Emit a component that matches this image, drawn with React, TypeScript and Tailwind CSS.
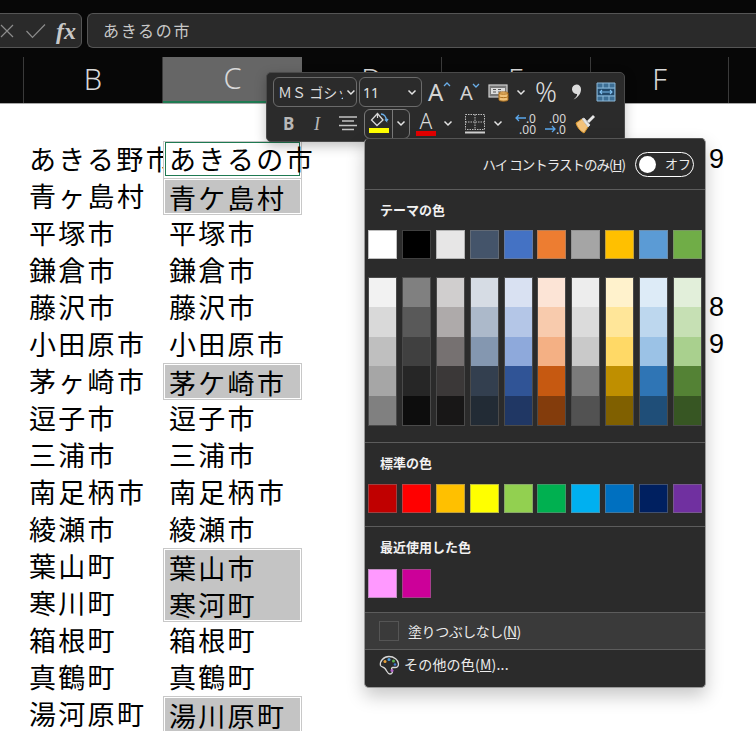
import React from "react";

const JP = "font-['Noto_Sans_CJK_JP','Noto_Sans',sans-serif]";

const theme = ["bg-[#ffffff]","bg-[#000000]","bg-[#e7e6e6]","bg-[#44546a]","bg-[#4472c4]","bg-[#ed7d31]","bg-[#a5a5a5]","bg-[#ffc000]","bg-[#5b9bd5]","bg-[#70ad47]"];
const shades = [
  ["bg-[#f2f2f2]","bg-[#d9d9d9]","bg-[#bfbfbf]","bg-[#a6a6a6]","bg-[#808080]"],
  ["bg-[#808080]","bg-[#595959]","bg-[#404040]","bg-[#262626]","bg-[#0d0d0d]"],
  ["bg-[#d0cece]","bg-[#aeaaaa]","bg-[#767171]","bg-[#3b3838]","bg-[#181717]"],
  ["bg-[#d6dce4]","bg-[#acb9ca]","bg-[#8497b0]","bg-[#333f4f]","bg-[#222b35]"],
  ["bg-[#d9e1f2]","bg-[#b4c6e7]","bg-[#8ea9db]","bg-[#305496]","bg-[#203764]"],
  ["bg-[#fce4d6]","bg-[#f8cbad]","bg-[#f4b084]","bg-[#c65911]","bg-[#833c0c]"],
  ["bg-[#ededed]","bg-[#dbdbdb]","bg-[#c9c9c9]","bg-[#7b7b7b]","bg-[#525252]"],
  ["bg-[#fff2cc]","bg-[#ffe699]","bg-[#ffd966]","bg-[#bf8f00]","bg-[#806000]"],
  ["bg-[#ddebf7]","bg-[#bdd7ee]","bg-[#9bc2e6]","bg-[#2f75b5]","bg-[#1f4e78]"],
  ["bg-[#e2efda]","bg-[#c6e0b4]","bg-[#a9d08e]","bg-[#548235]","bg-[#375623]"],
];
const standard = ["bg-[#c00000]","bg-[#ff0000]","bg-[#ffc000]","bg-[#ffff00]","bg-[#92d050]","bg-[#00b050]","bg-[#00b0f0]","bg-[#0070c0]","bg-[#002060]","bg-[#7030a0]"];
const recent = ["bg-[#ff99ff]","bg-[#cc0099]"];

const colB = ["あきる野市","青ヶ島村","平塚市","鎌倉市","藤沢市","小田原市","茅ヶ崎市","逗子市","三浦市","南足柄市","綾瀬市","葉山町","寒川町","箱根町","真鶴町","湯河原町"];
const colC: { t: string[]; sel?: boolean; active?: boolean }[] = [
  { t: ["あきるの市"], active: true },
  { t: ["青ケ島村"], sel: true },
  { t: ["平塚市"] }, { t: ["鎌倉市"] }, { t: ["藤沢市"] }, { t: ["小田原市"] },
  { t: ["茅ケ崎市"], sel: true },
  { t: ["逗子市"] }, { t: ["三浦市"] }, { t: ["南足柄市"] }, { t: ["綾瀬市"] },
  { t: ["葉山市", "寒河町"], sel: true },
  { t: ["箱根町"] }, { t: ["真鶴町"] },
  { t: ["湯川原町"], sel: true },
];
const digits = ["9","","","","8","9"];

const cellText = `${JP} text-[27px] tracking-[2.3px] h-[37px] leading-[36px] text-black whitespace-nowrap`;

function Swatch({ c }: { c: string }) {
  return <div className={`${c} w-[29px] h-[29px] border border-[#80808080]`} />;
}

function Chevron({ className = "" }: { className?: string }) {
  return (
    <svg width="10" height="7" viewBox="0 0 10 7" className={className}>
      <path d="M1.500 1.500 5 5l3.500-3.500" fill="none" stroke="#e4e4e4" strokeWidth="1.500" />
    </svg>
  );
}

function Label({ children }: { children: React.ReactNode }) {
  return <div className={`${JP} pl-[15px] text-[13px] font-bold leading-[20px] text-[#f2f2f2]`}>{children}</div>;
}

function Palette() {
  return (
    <svg width="21" height="21" viewBox="0 0 21 21">
      <path d="M10 1.500c5 0 9.500 3.500 9.500 7.500 0 2.500-2 3.500-3.500 3.500h-2c-1.500 0-1.800 1.500-1 2.500 1 1.300.5 4-2 4-2.500 0-3-3-5-5.500-1-1.300-3.500-1.500-4.500-3C.5 6.500 4.500 1.500 10 1.500Z" fill="#2b2b2b" stroke="#d8d8d8" strokeWidth="1.300" />
      <circle cx="6" cy="6.500" r="1.500" fill="#e8a23c" />
      <circle cx="10" cy="4.500" r="1.500" fill="#4aa0e0" />
      <circle cx="14.500" cy="6" r="1.500" fill="#5ab04a" />
      <circle cx="16" cy="9.500" r="1.300" fill="#3c7ad0" />
      <circle cx="13" cy="15.500" r="1.500" fill="#b060c8" />
    </svg>
  );
}

export default function App() {
  return (
    <div className={`relative w-[756px] h-[731px] overflow-hidden bg-white ${JP}`}>
      {/* formula bar */}
      <div className="flex h-[57px] bg-[#070707] pt-[13px] gap-[5px]">
        <div className="-ml-[10px] w-[92px] h-[35px] shrink-0 flex items-center rounded-[6px] border border-[#555] bg-[#2a2a2a]">
          <svg width="16" height="16" viewBox="0 0 16 16" className="ml-[8px]"><path d="M2 2l12 12M14 2 2 14" stroke="#8c8c8c" strokeWidth="1.200" /></svg>
          <svg width="22" height="16" viewBox="0 0 22 16" className="ml-[10px]"><path d="M1.500 8l6 6.500L20 1.500" fill="none" stroke="#8c8c8c" strokeWidth="1.200" /></svg>
          <span className="ml-[9px] font-['Liberation_Serif',serif] italic font-bold text-[24px] leading-none text-[#c8c8c8]">fx</span>
        </div>
        <div className="flex-1 h-[35px] flex items-center rounded-l-[6px] border border-r-0 border-[#555] bg-[#2a2a2a] pl-[15px] pb-[2px] text-[16px] tracking-[1.700px] text-[#c8c8c8]">あきるの市</div>
      </div>

      {/* column headers */}
      <div className="flex h-[47px] bg-[#070707] border-b border-[#a8a8a8] font-['Noto_Sans',sans-serif] text-[29px] font-light text-[#d8d8d8]">
        <div className="w-[24px] border-r border-[#3a3a3a]" />
        <div className="w-[139px] flex items-center justify-center pb-[2px] border-r border-[#3a3a3a]">B</div>
        <div className="w-[139px] flex items-center justify-center pb-[2px] bg-[#666666] border-b-[2px] border-[#1f7a52]">C</div>
        <div className="w-[140px] flex items-center justify-center pb-[2px] border-r border-[#3a3a3a]">D</div>
        <div className="w-[149px] flex items-center justify-center pb-[2px] border-r border-[#3a3a3a]">E</div>
        <div className="w-[138px] flex items-center justify-center pb-[2px] border-r border-[#3a3a3a]">F</div>
      </div>

      {/* sheet */}
      <div className="flex pt-[37px]">
        <div className="w-[163px] shrink-0 overflow-hidden pl-[29px]">
          {colB.map((t) => <div key={t} className={cellText}>{t}</div>)}
        </div>
        <div className="w-[139px] shrink-0">
          {colC.map((c) =>
            c.active ? (
              <div key={c.t[0]} className="h-[37px] bg-white border-x border-t border-[#c8c8c8] pb-[2px] px-[1px]">
                <div className="h-[34px] border border-[#1f7a52] pl-[3px]">
                  <div className={`${cellText} -mt-[2px]`}>{c.t[0]}</div>
                </div>
              </div>
            ) : c.sel ? (
              <div key={c.t[0]} className={`${c.t.length === 2 ? "h-[74px]" : "h-[37px]"} border border-[#c8c8c8] bg-white p-[1px]`}>
                <div className="h-full bg-[#c4c4c4] pl-[4px]">
                  {c.t.map((t) => <div key={t} className={cellText}>{t}</div>)}
                </div>
              </div>
            ) : (
              <div key={c.t[0]} className={`pl-[6px] ${cellText}`}>{c.t[0]}</div>
            )
          )}
        </div>
        <div className="flex-1 flex flex-col items-end pr-[32px]">
          {digits.map((d, i) => (
            <div key={i} className="h-[37px] font-['Liberation_Sans',sans-serif] text-[27px] leading-[37px] text-black">{d}</div>
          ))}
        </div>
      </div>

      {/* mini toolbar */}
      <div className="absolute left-[266px] top-[72px] w-[359px] h-[70px] rounded-[5px] border border-[#4a4a4a] bg-[#2b2b2b] px-[6px] pt-[4px] shadow-[0_4px_12px_rgba(0,0,0,0.25)]">
        <div className="flex items-center h-[30px]">
          <div className="w-[84px] h-[30px] flex items-center rounded-[6px] border border-[#6b6b6b] pl-[4px] text-[#dcdcdc] text-[14px]">
            <span className="w-[66px] overflow-hidden whitespace-nowrap">ＭＳ ゴシック</span>
            <Chevron className="ml-[3px]" />
          </div>
          <div className="ml-[2px] w-[63px] h-[30px] flex items-center justify-between rounded-[6px] border border-[#6b6b6b] pl-[3px] pr-[4px] text-[#e4e4e4] text-[14px] font-['Noto_Sans',sans-serif]">
            11<Chevron />
          </div>
          <div className="relative ml-[6px] w-[22px] h-[28px] font-['Noto_Sans',sans-serif] text-[24px] leading-[28px] text-[#d4d4d4]">
            A
            <svg width="8" height="5" viewBox="0 0 8 5" className="absolute -right-[1px] top-[4px]"><path d="M1 4l3-3 3 3" fill="none" stroke="#6aaee8" strokeWidth="1.300" /></svg>
          </div>
          <div className="relative ml-[10px] w-[19px] h-[28px] font-['Noto_Sans',sans-serif] text-[20px] leading-[30px] text-[#d4d4d4]">
            A
            <svg width="8" height="5" viewBox="0 0 8 5" className="absolute -right-[1px] top-[5px]"><path d="M1 1l3 3 3-3" fill="none" stroke="#6aaee8" strokeWidth="1.300" /></svg>
          </div>
          <svg width="22" height="22" viewBox="0 0 22 22" className="ml-[9px]">
            <rect x="1" y="4" width="18" height="12" fill="#777" stroke="#cfcfcf" strokeWidth="1.200" />
            <rect x="3" y="7" width="14" height="6" fill="#dcdcdc" />
            <path d="M5 8.500h3M5 11h3M10 8.500h3M10 11h3" stroke="#555" strokeWidth="1" />
            <path d="M11 12c0-1.500 9-1.500 9 0v7c0 1.500-9 1.500-9 0Z" fill="#f0c27a" stroke="#a86a18" strokeWidth="1" />
            <path d="M11 12c0 1.500 9 1.500 9 0M11 15.500c0 1.500 9 1.500 9 0" fill="none" stroke="#a86a18" strokeWidth="1" />
          </svg>
          <Chevron className="ml-[6px]" />
          <span className="ml-[9px] font-['Noto_Sans',sans-serif] text-[27px] leading-[28px] font-light text-[#dcdcdc]">%</span>
          <svg width="11" height="16" viewBox="0 0 11 16" className="ml-[14px]"><path d="M5.500 0.500a4.500 4.500 0 0 1 4.500 5c0 4-3 8-7.500 10C5.500 13 6.500 11 6 10a4.500 4.500 0 0 1-.5-9.500Z" fill="#dcdcdc" /></svg>
          <svg width="20" height="20" viewBox="0 0 20 20" className="ml-[14px]">
            <rect x="1" y="1" width="18" height="18" fill="#3d6e94" />
            <path d="M1 1h18v18H1ZM1 6h18M1 14h18M7 1v5M13 1v5M7 14v5M13 14v5" fill="none" stroke="#8cb8d8" strokeWidth="1" />
            <rect x="2" y="7" width="16" height="6" fill="#23496a" />
            <path d="M4 10h12M6 8l-2 2 2 2M14 8l2 2-2 2" fill="none" stroke="#7fc0f0" strokeWidth="1.100" />
          </svg>
        </div>

        <div className="flex items-center h-[31px] mt-[1px]">
          <span className="ml-[10px] w-[11px] font-['Noto_Sans',sans-serif] font-bold text-[17px] leading-none text-[#b8b8b8]">B</span>
          <span className="ml-[20px] w-[8px] font-['Liberation_Serif',serif] italic text-[18px] leading-none text-[#b8b8b8]">I</span>
          <svg width="18" height="15" viewBox="0 0 18 15" className="ml-[17px]"><path d="M0 1h18M3 5h12M0 9.500h18M3 13.500h12" stroke="#c4c4c4" strokeWidth="1.300" /></svg>
          <div className="ml-[7px] w-[46px] h-[30px] flex rounded-[6px] border border-[#7a7a7a]">
            <div className="w-[28px] border-r border-[#7a7a7a] flex flex-col items-center pt-[2px]">
              <svg width="20" height="16" viewBox="0 0 20 16">
                <path d="M8.500 1.500 2.500 8l5.500 5.500L14 8Z" fill="none" stroke="#d8d8d8" strokeWidth="1.300" />
                <path d="M8.500 1.500V6" stroke="#d8d8d8" strokeWidth="1.200" />
                <path d="M12 2c3 0 5 2 5.500 7l-1.500-1.500M17.500 9l1.500-2" fill="none" stroke="#6aaee8" strokeWidth="1.300" />
              </svg>
              <div className="w-[20px] h-[5px] bg-[#ffff00]" />
            </div>
            <div className="flex-1 flex items-center justify-center"><Chevron /></div>
          </div>
          <div className="ml-[6px] w-[20px] flex flex-col items-center">
            <span className="font-['Noto_Sans',sans-serif] text-[21px] leading-[20px] font-light text-[#dcdcdc]">A</span>
            <div className="w-[20px] h-[5px] bg-[#e30000]" />
          </div>
          <Chevron className="ml-[7px]" />
          <svg width="20" height="20" viewBox="0 0 20 20" className="ml-[12px]">
            <path d="M.5.500h19v15H.5ZM10 .5v15M.5 8h19" fill="none" stroke="#bdbdbd" strokeWidth="1" strokeDasharray="1.500 1" />
            <path d="M0 18.500h20" stroke="#d0d0d0" strokeWidth="2" />
          </svg>
          <Chevron className="ml-[8px]" />
          <div className="ml-[12px] w-[21px] flex flex-col font-['Noto_Sans',sans-serif] text-[12px] leading-[11px] text-[#d8d8d8] items-end">
            <div className="flex items-center"><svg width="11" height="8" viewBox="0 0 11 8"><path d="M11 4H1M4 1 1 4l3 3" fill="none" stroke="#5aa6ea" strokeWidth="1.300" /></svg><span>.0</span></div>
            <span>.00</span>
          </div>
          <div className="ml-[9px] w-[21px] flex flex-col font-['Noto_Sans',sans-serif] text-[12px] leading-[11px] text-[#d8d8d8] items-end">
            <span>.00</span>
            <div className="flex items-center"><svg width="11" height="8" viewBox="0 0 11 8"><path d="M0 4h10M7 1l3 3-3 3" fill="none" stroke="#5aa6ea" strokeWidth="1.300" /></svg><span>.0</span></div>
          </div>
          <svg width="21" height="20" viewBox="0 0 21 20" className="ml-[9px]">
            <path d="M7 5 1 9c1 4 4 8 8 10l4-6Z" fill="#f3c27a" stroke="#d8962c" strokeWidth="1" />
            <path d="M7 5l6 8 2-2-6-7Z" fill="#e8e8e8" stroke="#cfcfcf" strokeWidth="1" />
            <path d="M12 7l6-6 2 2-6 6Z" fill="#e8e8e8" />
          </svg>
        </div>
      </div>

      {/* colour menu */}
      <div className="absolute left-[364px] top-[138px] w-[342px] h-[550px] rounded-[5px] border border-[#9a9a9a] border-t-[#555] bg-[#2b2b2b] shadow-[0_8px_18px_rgba(0,0,0,0.22)] flex flex-col text-[#ececec]">
        <div className="h-[51px] shrink-0 flex items-center justify-end pr-[11px] border-b border-[#5c5c5c] text-[13.500px]">
          <span className="tracking-[-1px]">ハイ コントラストのみ(<span className="underline">H</span>)</span>
          <div className="ml-[10px] w-[59px] h-[25px] flex items-center rounded-full border-[1.500px] border-white pl-[3px] text-[13px]">
            <div className="w-[17px] h-[17px] rounded-full bg-white" />
            <span className="ml-[9px]">オフ</span>
          </div>
        </div>

        <div className="mt-[10px]"><Label>テーマの色</Label></div>
        <div className="mt-[10px] flex justify-between pl-[3px] pr-[3px]">
          {theme.map((c) => <Swatch key={c} c={c} />)}
        </div>
        <div className="mt-[18px] flex justify-between pl-[3px] pr-[3px]">
          {shades.map((col, i) => (
            <div key={i} className="w-[29px] h-[149px] flex flex-col border border-[#80808060]">
              {col.map((c, j) => <div key={j} className={`${c} flex-1`} />)}
            </div>
          ))}
        </div>

        <div className="mt-[16px] border-t border-[#5c5c5c] pt-[10px]"><Label>標準の色</Label></div>
        <div className="mt-[11px] flex justify-between pl-[3px] pr-[3px]">
          {standard.map((c) => <Swatch key={c} c={c} />)}
        </div>

        <div className="mt-[13px] border-t border-[#5c5c5c] pt-[10px]"><Label>最近使用した色</Label></div>
        <div className="mt-[12px] flex gap-[5px] pl-[3px]">
          {recent.map((c) => <Swatch key={c} c={c} />)}
        </div>

        <div className="mt-[14px] h-[38px] shrink-0 flex items-center border-y border-[#5c5c5c] bg-[#3a3a3a] pl-[14px] text-[14px]">
          <div className="w-[20px] h-[20px] border border-[#555]" />
          <span className="ml-[9px] pt-[1px] tracking-[-0.5px]">塗りつぶしなし(<span className="underline">N</span>)</span>
        </div>
        <div className="flex-1 flex pl-[14px] pt-[5px] text-[14px] leading-[18px]">
          <Palette />
          <span className="ml-[4px] tracking-[0.2px]">その他の色(<span className="underline">M</span>)...</span>
        </div>
      </div>
    </div>
  );
}
